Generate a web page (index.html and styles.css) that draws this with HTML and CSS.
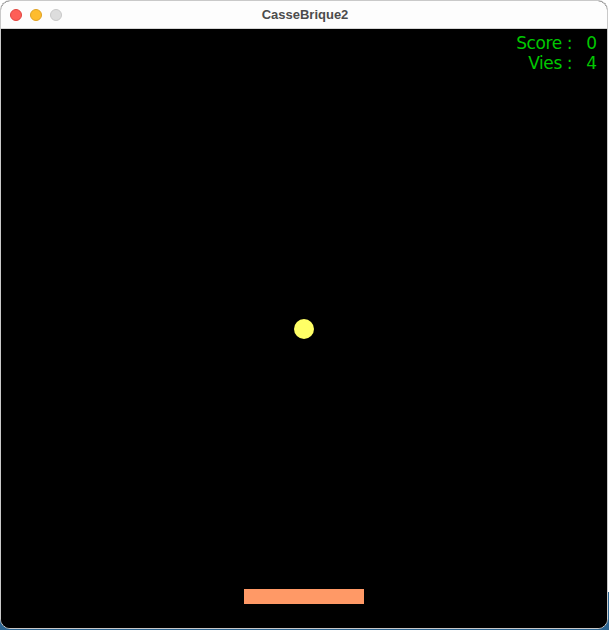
FILE: index.html
```html
<!DOCTYPE html>
<html>
<head>
<meta charset="utf-8">
<link rel="stylesheet" href="styles.css">
</head>
<body>
<div class="window">
  <div class="titlebar">
    <div class="lights">
      <span class="light red"></span>
      <span class="light yellow"></span>
      <span class="light grey"></span>
    </div>
    <div class="title">CasseBrique2</div>
  </div>
  <div class="canvas">
    <div class="hud">
      <span class="label">Score :</span><span class="value">0</span>
      <span class="label">Vies :</span><span class="value">4</span>
    </div>
    <div class="ball"></div>
    <div class="paddle"></div>
  </div>
</div>
</body>
</html>
```
FILE: styles.css
```css
html, body {
  margin: 0;
  padding: 0;
  width: 609px;
  height: 630px;
  overflow: hidden;
}
body {
  background: linear-gradient(to bottom, #ffffff 0, #ffffff 592px, #2c6591 592px, #2c6591 100%);
}
.window {
  box-sizing: border-box;
  width: 608px;
  height: 629px;
  border: 1px solid #c9c9c9;
  border-radius: 10px;
  overflow: hidden;
  display: flex;
  flex-direction: column;
  background: #000;
}
.titlebar {
  height: 27px;
  flex: none;
  background: #fdfdfd;
  border-bottom: 1px solid #d6d6d6;
  position: relative;
  display: flex;
  align-items: center;
}
.lights {
  display: flex;
  gap: 8px;
  padding-left: 9px;
}
.light {
  width: 12px;
  height: 12px;
  border-radius: 50%;
  box-sizing: border-box;
}
.red { background: #fe5f57; border: 0.5px solid #e0443e; }
.yellow { background: #febc2e; border: 0.5px solid #dea123; }
.grey { background: #dddddd; border: 0.5px solid #c8c8c8; }
.title {
  position: absolute;
  left: 0;
  right: 0;
  top: 0;
  height: 27px;
  line-height: 28px;
  text-align: center;
  font-family: "Liberation Sans", Arial, sans-serif;
  font-weight: bold;
  font-size: 13px;
  color: #4c4c4c;
  padding-left: 2px;
}
.canvas {
  flex: 1;
  position: relative;
  background: #000;
}
.hud {
  position: absolute;
  top: 4px;
  right: 10px;
  display: grid;
  grid-template-columns: auto auto;
  column-gap: 14px;
  row-gap: 0;
  font-family: "DejaVu Sans", sans-serif;
  font-size: 17px;
  line-height: 20px;
  color: #00c800;
}
.label { text-align: right; letter-spacing: -0.4px; }
.value { text-align: right; }
.ball {
  position: absolute;
  left: 293px;
  top: 290px;
  width: 20px;
  height: 20px;
  border-radius: 50%;
  background: #ffff66;
}
.paddle {
  position: absolute;
  left: 243px;
  top: 560px;
  width: 120px;
  height: 15px;
  background: #ff9966;
}
```
